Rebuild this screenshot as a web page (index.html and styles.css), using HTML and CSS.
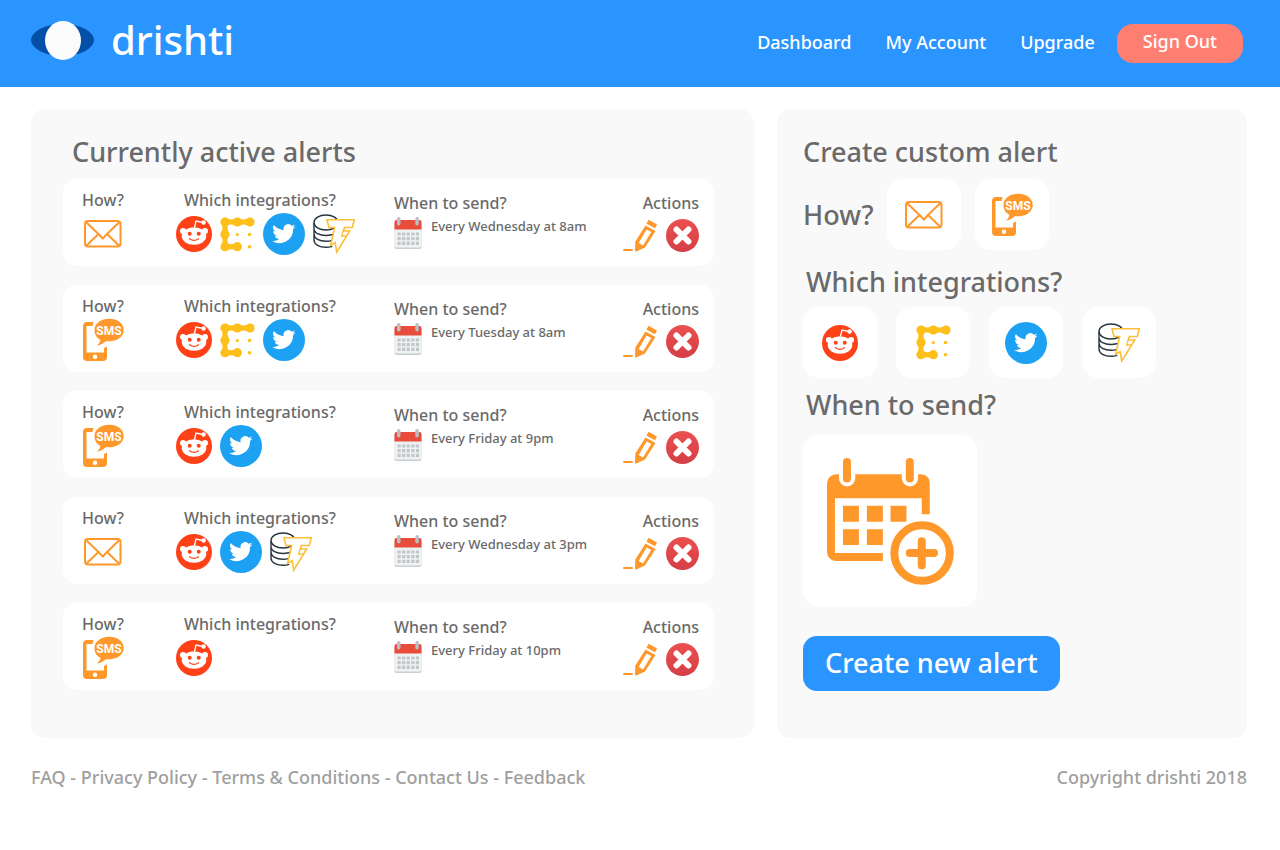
FILE: index.html
```html
<!DOCTYPE html>
<html lang="en">
<head>
<meta charset="utf-8">
<meta name="viewport" content="width=device-width, initial-scale=1">
<title>drishti</title>
<link rel="stylesheet" href="styles.css">
</head>
<body>
<svg class="sprite" aria-hidden="true">
  <defs>
    <linearGradient id="red-fade" x1="0" y1="0" x2="0" y2="1"><stop offset="0" stop-color="#eb5050"/><stop offset="1" stop-color="#d53e45"/></linearGradient>
  </defs>
  <symbol id="mail" viewBox="0 0 38 28">
    <g fill="none" stroke="#ff982b" stroke-width="2">
      <rect x="1" y="1" width="35.500" height="25.500" rx="3"/>
      <path d="M2 2 14.500 14 2.500 25.500M35.500 2 23 14 35 25.500M14.500 14l4.300 4.500L23 14"/>
    </g>
  </symbol>
  <symbol id="sms" viewBox="0 0 42 44">
    <path fill="#ff982b" fill-rule="evenodd" d="M11.500 4H5Q1 4 1 8v31q0 4 4 4h16q4 0 4-4V28.500l-3 1.500v4.500H4.500V8h6zM13 36.500a2.200 2.200 0 1 1 0 4.400 2.200 2.200 0 0 1 0-4.400z"/>
    <path fill="#ff982b" d="M27.300.8C19.500.8 12.500 5 12.500 12.200c0 4.500 2.500 8 6 9.600-.5 2.500-1.800 4.200-3.800 6 4-.6 6.800-2.500 9-4.500 10.500.7 18-4 18-11.100S35 .8 27.300.8z"/>
  </symbol>
  <symbol id="reddit" viewBox="0 0 36 36">
    <circle cx="18" cy="18" r="18" fill="#ff4118"/>
    <g fill="#fff">
      <ellipse cx="18" cy="20" rx="12.300" ry="8.700"/><circle cx="7" cy="15" r="3"/><circle cx="29" cy="15" r="3"/><circle cx="27.600" cy="6.500" r="2.200"/>
    </g>
    <path d="M18.500 11.500 20 5l7 1.500" fill="none" stroke="#fff" stroke-width="1.300"/>
    <circle cx="13.700" cy="17.800" r="2" fill="#ff4118"/><circle cx="22.700" cy="17.800" r="2" fill="#ff4118"/>
    <path d="M13.500 22.800q4.500 3.300 9 0" fill="none" stroke="#ff4118" stroke-width="1.300" stroke-linecap="round"/>
  </symbol>
  <symbol id="blocks" viewBox="0 0 35 35">
    <g fill="#fdc01b">
      <circle cx="5" cy="5" r="4.600"/><circle cx="17.300" cy="5" r="4.600"/><circle cx="30" cy="5" r="4.600"/>
      <circle cx="5" cy="17.500" r="4.600"/><circle cx="5" cy="29.700" r="4.600"/><circle cx="17.300" cy="29.700" r="4.600"/>
      <circle cx="17.300" cy="17.500" r="1.600"/><circle cx="29.500" cy="17.500" r="1.800"/><circle cx="29.500" cy="29.700" r="1.800"/>
      <path d="M5 .7Q11 4.300 17.300.7V9.300Q11 5.700 5 9.300z"/>
      <path d="M17.300.7Q23.600 4.300 30 .7V9.300Q23.600 5.700 17.300 9.300z"/>
      <path d="M5 25.400Q11 29 17.300 25.400V34Q11 30.400 5 34z"/>
      <path d="M.7 5Q4.300 11 .7 17.500H9.300Q5.700 11 9.300 5z"/>
      <path d="M.7 17.500Q4.300 23.600.7 29.700H9.300Q5.700 23.600 9.300 17.500z"/>
    </g>
  </symbol>
  <symbol id="twitter" viewBox="0 0 42 42">
    <circle cx="21" cy="21" r="21" fill="#1da1f2"/>
    <path fill="#fff" transform="translate(9.200 9) scale(.97)" d="M24 4.600a10 10 0 0 1-2.800.8 5 5 0 0 0 2.100-2.700c-1 .6-2 1-3.100 1.200a4.900 4.900 0 0 0-8.400 4.500A14 14 0 0 1 1.700 3.200 4.900 4.900 0 0 0 3.200 9.700c-.8 0-1.600-.2-2.200-.6a4.900 4.900 0 0 0 3.900 4.900 5 5 0 0 1-2.200.1 4.900 4.900 0 0 0 4.600 3.400A9.900 9.900 0 0 1 0 19.500a14 14 0 0 0 21.500-12.400c1-.7 1.800-1.600 2.500-2.500z"/>
  </symbol>
  <symbol id="bolt" viewBox="0 0 42 40">
    <g fill="none" stroke="#27343d" stroke-width="1.400">
      <ellipse cx="13" cy="8.500" rx="12" ry="7.500"/>
      <path d="M1 9v17c0 4.500 5.500 7.300 12 7.300 2.300 0 4.500-.4 6.300-1M1 14.500c0 4.500 5.500 7 12 7 1.800 0 3.500-.3 7-1M1 20c0 4.500 5.500 7.200 12 7.200 2.200 0 4.200-.3 6-.9"/>
    </g>
    <path d="M14 5.700h27.300l-2 7.800h-7.800l-1.200 3.500h6.400l-13 21.200-1.500-9.500-4.500 2.300 4-17.500H16z" fill="#fff" stroke="#fdbf38" stroke-width="1.600"/>
    <path d="M31.500 13.500 28.500 22H33" fill="none" stroke="#fdbf38" stroke-width="1.300"/>
  </symbol>
  <symbol id="calendar" viewBox="0 0 28 32">
    <rect x=".5" y="5" width="27" height="27" rx="2" fill="#c9ced1"/>
    <path d="M.5 11h27v17.500q0 2-2 2h-23q-2 0-2-2z" fill="#eff2f3"/>
    <path d="M2.500 3h23q2 0 2 2v7.500H.5V5q0-2 2-2z" fill="#e84d3c"/>
    <g fill="#b9bfc3"><rect x="3" width="3.500" height="8.500" rx="1.700"/><rect x="21.300" width="3.500" height="8.500" rx="1.700"/></g>
    <path d="M3.500 17h21.500M3.500 21.700h21.500M3.500 26.400h21.500" stroke="#c2c7ca" stroke-width="3.200" stroke-dasharray="3.200 1.380"/>
  </symbol>
  <symbol id="pencil" viewBox="0 0 35 33">
    <g fill="#ff982b">
      <rect y="30" width="10" height="2" rx="1"/>
      <path fill-rule="evenodd" d="M22.500 6.500 32.500 12 22 28.500 13.300 32.500q-1.300.2-1.300-1.300l.3-8.700zM23.600 10.500 15.700 24l4.300 2.500 8.300-13.500z"/>
      <path d="m25.500.8 8.500 4.700-2 3.800L23.500 4.700z"/>
    </g>
  </symbol>
  <symbol id="remove" viewBox="0 0 33 33">
    <circle cx="16.500" cy="16.500" r="16.500" fill="url(#red-fade)"/>
    <path d="m10.500 10.500 12 12m0-12-12 12" stroke="#fff" stroke-width="6" stroke-linecap="round"/>
  </symbol>
  <symbol id="schedule" viewBox="96 98 382 382">
    <g fill="#ff982b">
      <path fill-rule="evenodd" d="M122 147h10v12a24.500 24.500 0 0 0 49 0v-12h140v12a24.500 24.500 0 0 0 49 0v-12h10q25 3 25 26v94h-24v-48H120v165h144v24H122q-23-3-26-26V173q3-23 26-26z"/>
      <rect x="144" y="98" width="24" height="74" rx="12"/><rect x="333" y="98" width="24" height="74" rx="12"/>
      <path d="M144 242h48v48h-48zM216 242h48v48h-48zM287 242h48v48h-48zM144 312h48v48h-48zM216 312h48v48h-48z"/>
    </g>
    <circle cx="382" cy="384" r="83.500" fill="#fff" stroke="#ff982b" stroke-width="24"/>
    <path d="M345 384h73M381 348v73" stroke="#ff982b" stroke-width="24" stroke-linecap="round"/>
  </symbol>
</svg>

<header class="topbar">
  <a class="brand" href="#">
    <svg class="brand-eye" viewBox="0 0 63 40" aria-hidden="true"><ellipse cx="31.500" cy="20" rx="31.500" ry="16" fill="#0450a8"/><ellipse cx="32" cy="20.500" rx="18" ry="19.500" fill="#fbfbfb"/></svg>
    <span>drishti</span>
  </a>
  <nav class="nav">
    <a href="#">Dashboard</a>
    <a href="#">My Account</a>
    <a href="#">Upgrade</a>
    <button class="signout" type="button">Sign Out</button>
  </nav>
</header>

<main class="panels">
  <section class="panel active-panel">
    <h1 class="title active-title">Currently active alerts</h1>
    <div class="alerts">
      <article class="alert">
        <div class="cell"><h2>How?</h2><div class="strip how"><svg class="i-mail"><use href="#mail"/></svg></div></div>
        <div class="cell"><h2 class="inset">Which integrations?</h2><div class="strip"><svg class="i-reddit"><use href="#reddit"/></svg><svg class="i-blocks"><use href="#blocks"/></svg><svg class="i-twitter"><use href="#twitter"/></svg><svg class="i-bolt"><use href="#bolt"/></svg></div></div>
        <div class="cell low"><h2>When to send?</h2><div class="when"><svg class="i-calendar"><use href="#calendar"/></svg><span>Every Wednesday at 8am</span></div></div>
        <div class="cell low end"><h2>Actions</h2><div class="actions"><button type="button" aria-label="Edit alert"><svg class="i-pencil"><use href="#pencil"/></svg></button><button type="button" aria-label="Delete alert"><svg class="i-remove"><use href="#remove"/></svg></button></div></div>
      </article>
      <article class="alert">
        <div class="cell"><h2>How?</h2><div class="strip"><svg class="i-sms" viewBox="0 0 42 44"><use href="#sms"/><text x="27" y="16.500" text-anchor="middle">SMS</text></svg></div></div>
        <div class="cell"><h2 class="inset">Which integrations?</h2><div class="strip"><svg class="i-reddit"><use href="#reddit"/></svg><svg class="i-blocks"><use href="#blocks"/></svg><svg class="i-twitter"><use href="#twitter"/></svg></div></div>
        <div class="cell low"><h2>When to send?</h2><div class="when"><svg class="i-calendar"><use href="#calendar"/></svg><span>Every Tuesday at 8am</span></div></div>
        <div class="cell low end"><h2>Actions</h2><div class="actions"><button type="button" aria-label="Edit alert"><svg class="i-pencil"><use href="#pencil"/></svg></button><button type="button" aria-label="Delete alert"><svg class="i-remove"><use href="#remove"/></svg></button></div></div>
      </article>
      <article class="alert">
        <div class="cell"><h2>How?</h2><div class="strip"><svg class="i-sms" viewBox="0 0 42 44"><use href="#sms"/><text x="27" y="16.500" text-anchor="middle">SMS</text></svg></div></div>
        <div class="cell"><h2 class="inset">Which integrations?</h2><div class="strip"><svg class="i-reddit"><use href="#reddit"/></svg><svg class="i-twitter"><use href="#twitter"/></svg></div></div>
        <div class="cell low"><h2>When to send?</h2><div class="when"><svg class="i-calendar"><use href="#calendar"/></svg><span>Every Friday at 9pm</span></div></div>
        <div class="cell low end"><h2>Actions</h2><div class="actions"><button type="button" aria-label="Edit alert"><svg class="i-pencil"><use href="#pencil"/></svg></button><button type="button" aria-label="Delete alert"><svg class="i-remove"><use href="#remove"/></svg></button></div></div>
      </article>
      <article class="alert">
        <div class="cell"><h2>How?</h2><div class="strip how"><svg class="i-mail"><use href="#mail"/></svg></div></div>
        <div class="cell"><h2 class="inset">Which integrations?</h2><div class="strip"><svg class="i-reddit"><use href="#reddit"/></svg><svg class="i-twitter"><use href="#twitter"/></svg><svg class="i-bolt"><use href="#bolt"/></svg></div></div>
        <div class="cell low"><h2>When to send?</h2><div class="when"><svg class="i-calendar"><use href="#calendar"/></svg><span>Every Wednesday at 3pm</span></div></div>
        <div class="cell low end"><h2>Actions</h2><div class="actions"><button type="button" aria-label="Edit alert"><svg class="i-pencil"><use href="#pencil"/></svg></button><button type="button" aria-label="Delete alert"><svg class="i-remove"><use href="#remove"/></svg></button></div></div>
      </article>
      <article class="alert">
        <div class="cell"><h2>How?</h2><div class="strip"><svg class="i-sms" viewBox="0 0 42 44"><use href="#sms"/><text x="27" y="16.500" text-anchor="middle">SMS</text></svg></div></div>
        <div class="cell"><h2 class="inset">Which integrations?</h2><div class="strip"><svg class="i-reddit"><use href="#reddit"/></svg></div></div>
        <div class="cell low"><h2>When to send?</h2><div class="when"><svg class="i-calendar"><use href="#calendar"/></svg><span>Every Friday at 10pm</span></div></div>
        <div class="cell low end"><h2>Actions</h2><div class="actions"><button type="button" aria-label="Edit alert"><svg class="i-pencil"><use href="#pencil"/></svg></button><button type="button" aria-label="Delete alert"><svg class="i-remove"><use href="#remove"/></svg></button></div></div>
      </article>
    </div>
  </section>

  <section class="panel create-panel">
    <h1 class="title">Create custom alert</h1>
    <div class="how-row">
      <h2 class="title">How?</h2>
      <div class="how-tiles">
        <button class="tile" type="button" aria-label="Email"><svg class="i-mail"><use href="#mail"/></svg></button>
        <button class="tile" type="button" aria-label="Text message"><svg class="i-sms" viewBox="0 0 42 44"><use href="#sms"/><text x="27" y="16.500" text-anchor="middle">SMS</text></svg></button>
      </div>
    </div>
    <h2 class="title which-title">Which integrations?</h2>
    <div class="tiles">
      <button class="tile" type="button" aria-label="Reddit"><svg class="i-reddit"><use href="#reddit"/></svg></button>
      <button class="tile" type="button" aria-label="Blocks"><svg class="i-blocks"><use href="#blocks"/></svg></button>
      <button class="tile" type="button" aria-label="Twitter"><svg class="i-twitter"><use href="#twitter"/></svg></button>
      <button class="tile" type="button" aria-label="Database"><svg class="i-bolt"><use href="#bolt"/></svg></button>
    </div>
    <h2 class="title when-title">When to send?</h2>
    <button class="tile schedule" type="button" aria-label="Choose a date"><svg class="i-schedule"><use href="#schedule"/></svg></button>
    <button class="create" type="button">Create new alert</button>
  </section>
</main>

<footer class="footer">
  <div><a href="#">FAQ</a> - <a href="#">Privacy Policy</a> - <a href="#">Terms &amp; Conditions</a> - <a href="#">Contact Us</a> - <a href="#">Feedback</a></div>
  <div>Copyright drishti 2018</div>
</footer>
</body>
</html>
```
FILE: styles.css
```css
* { box-sizing: border-box; }

body {
  margin: 0;
  background: #fff;
  color: #6a6a6a;
  font-family: "Noto Sans", "Open Sans", sans-serif;
  font-weight: 500;
}

h1, h2 { margin: 0; font-weight: 500; }
a { color: inherit; text-decoration: none; }
button { border: 0; padding: 0; background: none; color: inherit; font: inherit; cursor: pointer; }
svg { display: block; flex: none; }
.sprite { position: absolute; width: 0; height: 0; }

.topbar {
  display: flex;
  justify-content: space-between;
  align-items: center;
  padding: 9px 37px 9px 31px;
  min-height: 87px;
  background: #2b95ff;
  color: #fff;
}
.brand { display: flex; align-items: center; gap: 17px; padding-bottom: 8px; font-size: 40px; line-height: 60px; }
.brand-eye { width: 63px; height: 40px; }
.nav { display: flex; align-items: center; gap: 34px; font-size: 18px; line-height: 24px; }
.nav a { padding-bottom: 4px; }
.signout { margin-left: -12px; padding: 5px 26px 10px; border-radius: 16px; background: #ff7e72; }

.panels { display: grid; grid-template-columns: 723fr 470fr; gap: 23px; padding: 22px 33px 0 31px; }
.panel { padding: 22px 26px 47px; border-radius: 14px; background: #f9f9f9; }
.active-panel { padding-left: 32px; padding-right: 40px; }
.title { font-size: 27px; line-height: 42px; }
.active-title { padding-left: 9px; }

.alerts { display: grid; gap: 19px; margin-top: 6px; }
.alert {
  display: grid;
  grid-template-columns: 94px 218px 1fr auto;
  padding: 9px 15px 10px 19px;
  border-radius: 14px;
  background: #fff;
}
.cell h2 { font-size: 16px; line-height: 24px; white-space: nowrap; }
.cell .inset { padding-left: 8px; }
.low { padding-top: 3px; }
.end { display: flex; flex-direction: column; align-items: flex-end; }
.strip { display: flex; align-items: center; gap: 8px; height: 44px; }
.how { padding-left: 2px; }
.when { display: flex; align-items: flex-start; gap: 9px; padding-top: 2px; font-size: 13px; line-height: 18px; }
.actions { display: flex; gap: 8px; padding-top: 4px; }

.i-mail { width: 38px; height: 28px; }
.i-sms { width: 42px; height: 44px; }
.i-sms text { fill: #fff; font: bold 12px Roboto, "Liberation Sans", sans-serif; }
.i-reddit { width: 36px; height: 36px; }
.i-blocks { width: 35px; height: 35px; }
.i-twitter { width: 42px; height: 42px; }
.i-bolt { width: 42px; height: 40px; }
.i-calendar { width: 28px; height: 32px; }
.i-pencil { width: 35px; height: 33px; }
.i-remove { width: 33px; height: 33px; }
.i-schedule { width: 127px; height: 127px; }

.how-row { display: flex; align-items: center; gap: 13px; margin-top: 6px; }
.how-tiles { display: flex; gap: 14px; }
.tile { display: grid; place-items: center; width: 74px; height: 71px; border-radius: 16px; background: #fff; }
.tiles { display: flex; gap: 19px; }
.which-title { padding: 0 3px; margin: 11px 0 4px; }
.when-title { padding: 0 3px; margin: 6px 0 9px; }
.schedule { width: 174px; height: 172px; }
.create { margin-top: 29px; padding: 6px 22px 7px; border-radius: 14px; background: #2b95ff; color: #fff; font-size: 27px; line-height: 42px; }

.footer { display: flex; justify-content: space-between; gap: 24px; padding: 25px 33px 24px 31px; color: #9f9f9f; font-size: 18px; line-height: 28px; }
```
